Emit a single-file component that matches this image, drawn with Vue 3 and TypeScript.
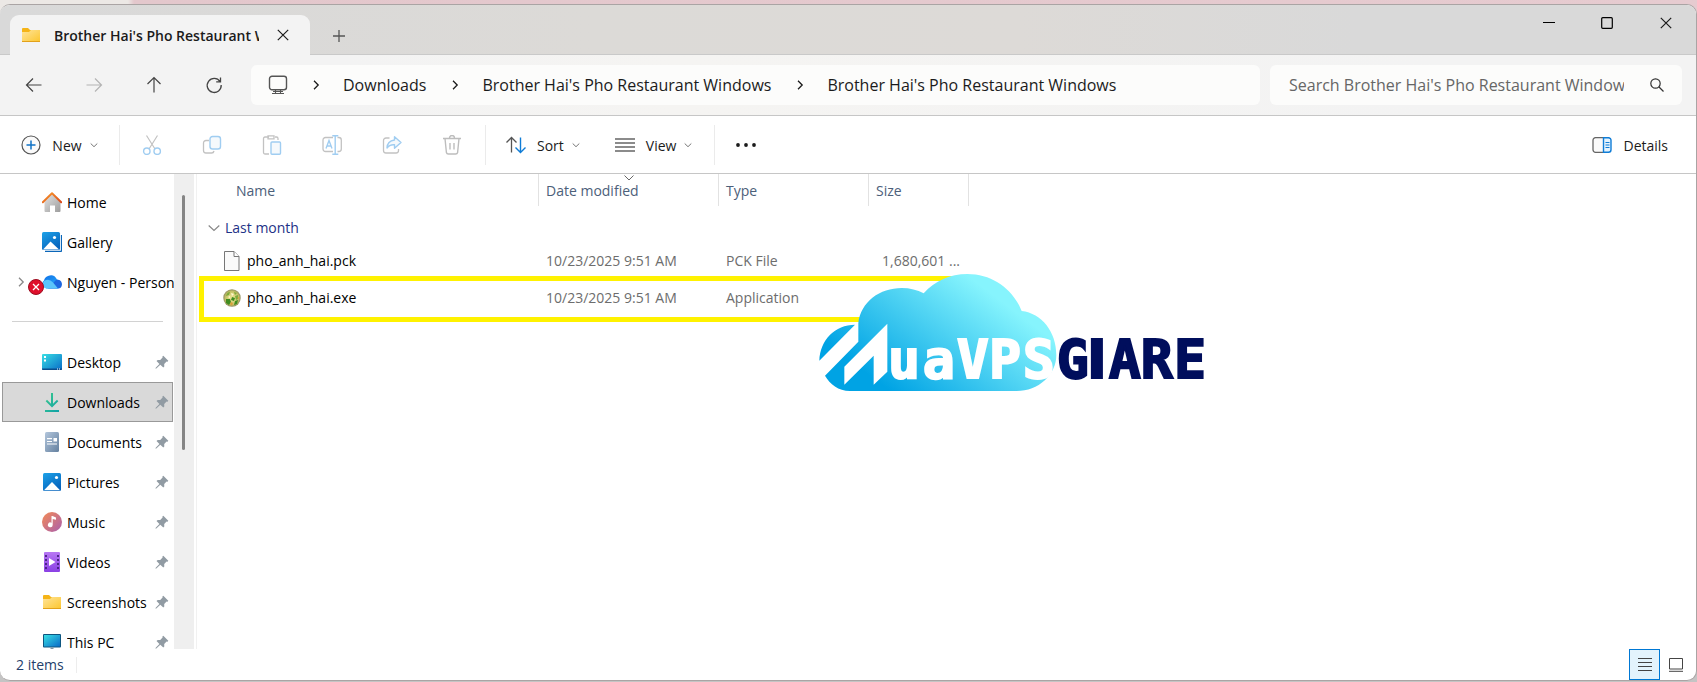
<script setup lang="ts">
interface NavItem {
  label: string
  icon: string
  pinned?: boolean
  selected?: boolean
  sync?: boolean
}

interface FileRow {
  name: string
  icon: string
  modified: string
  type: string
  size: string
  marked?: boolean
}

const places: NavItem[] = [
  { label: 'Home', icon: 'home' },
  { label: 'Gallery', icon: 'gallery' },
  { label: 'Nguyen - Personal', icon: 'cloud', sync: true },
]

const pinned: NavItem[] = [
  { label: 'Desktop', icon: 'desktop', pinned: true },
  { label: 'Downloads', icon: 'downloads', pinned: true, selected: true },
  { label: 'Documents', icon: 'documents', pinned: true },
  { label: 'Pictures', icon: 'pictures', pinned: true },
  { label: 'Music', icon: 'music', pinned: true },
  { label: 'Videos', icon: 'videos', pinned: true },
  { label: 'Screenshots', icon: 'folder', pinned: true },
  { label: 'This PC', icon: 'pc', pinned: true },
]

const crumbs: string[] = [
  'Downloads',
  "Brother Hai's Pho Restaurant Windows",
  "Brother Hai's Pho Restaurant Windows",
]

const navButtons = [
  { label: 'Back', icon: 'back' },
  { label: 'Forward', icon: 'forward' },
  { label: 'Up', icon: 'up' },
  { label: 'Refresh', icon: 'refresh' },
]

const fileActions = [
  { label: 'Cut', icon: 'cut' },
  { label: 'Copy', icon: 'copy' },
  { label: 'Paste', icon: 'paste' },
  { label: 'Rename', icon: 'rename' },
  { label: 'Share', icon: 'share' },
  { label: 'Delete', icon: 'trash' },
]

const files: FileRow[] = [
  { name: 'pho_anh_hai.pck', icon: 'file', modified: '10/23/2025 9:51 AM', type: 'PCK File', size: '1,680,601 ...' },
  { name: 'pho_anh_hai.exe', icon: 'game', modified: '10/23/2025 9:51 AM', type: 'Application', size: '', marked: true },
]
</script>

<template>
  <div class="desktop">
    <svg class="sprite" width="0" height="0" aria-hidden="true">
      <defs>
        <linearGradient id="g-folder" x1="0" y1="0" x2="1" y2="1"><stop offset="0" stop-color="#ffe49a" /><stop offset="1" stop-color="#fcc62e" /></linearGradient>
        <linearGradient id="g-roof" x1="0" y1="0" x2="1" y2="1"><stop offset="0" stop-color="#f99a2c" /><stop offset="1" stop-color="#d9491a" /></linearGradient>
        <linearGradient id="g-wall" x1="0" y1="0" x2="1" y2="1"><stop offset="0" stop-color="#e2e2e2" /><stop offset="1" stop-color="#9d9d9d" /></linearGradient>
        <linearGradient id="g-pic" x1="0" y1="0" x2="0.6" y2="1"><stop offset="0" stop-color="#1ea2e8" /><stop offset="1" stop-color="#0664bd" /></linearGradient>
        <linearGradient id="g-desk" x1="0" y1="0" x2="1" y2="1"><stop offset="0" stop-color="#38dfe4" /><stop offset="1" stop-color="#0a6cc8" /></linearGradient>
        <linearGradient id="g-down" x1="0" y1="0" x2="1" y2="1"><stop offset="0" stop-color="#3dcb8b" /><stop offset="1" stop-color="#0fa0a8" /></linearGradient>
        <linearGradient id="g-doc" x1="0" y1="0" x2="1" y2="1"><stop offset="0" stop-color="#b3c6dc" /><stop offset="1" stop-color="#64809f" /></linearGradient>
        <linearGradient id="g-music" x1="0" y1="0" x2="1" y2="1"><stop offset="0" stop-color="#f48b55" /><stop offset="1" stop-color="#a95fae" /></linearGradient>
        <linearGradient id="g-video" x1="0" y1="0" x2="0" y2="1"><stop offset="0" stop-color="#b777f3" /><stop offset="1" stop-color="#8a40e4" /></linearGradient>
        <linearGradient id="g-cloud" x1="0" y1="0" x2="1" y2="1"><stop offset="0" stop-color="#0f6ee8" /><stop offset="1" stop-color="#2ab3fb" /></linearGradient>
        <radialGradient id="g-game"><stop offset="0" stop-color="#f1e79a" /><stop offset="0.75" stop-color="#c5c268" /><stop offset="1" stop-color="#8f8d5e" /></radialGradient>
      </defs>

      <symbol id="i-folder" viewBox="0 0 20 20">
        <path d="M1 4a1 1 0 0 1 1-1h5l2 2h9a1 1 0 0 1 1 1v10H1z" fill="#f5b417" />
        <path d="M1 7h7l2-2h9v12H1z" fill="url(#g-folder)" />
        <path d="M1 16h18v1H1z" fill="#e2a11a" />
      </symbol>
      <symbol id="i-home" viewBox="0 0 20 20">
        <path d="M2.500 10 10 2.500l8.500 7.500v9a1 1 0 0 1-1 1H13v-6.500H8V20H3.500a1 1 0 0 1-1-1z" fill="url(#g-wall)" />
        <path d="M.8 10.200 10 1.200l9.200 9" fill="none" stroke="url(#g-roof)" stroke-width="2" stroke-linecap="round" stroke-linejoin="round" />
      </symbol>
      <symbol id="i-gallery" viewBox="0 0 20 20">
        <path d="M3 19.500h15.500a1 1 0 0 0 1-1V3" fill="none" stroke="#0b66b8" stroke-width="1.300" />
        <rect width="18" height="18" rx="1.500" fill="url(#g-pic)" />
        <path d="m1 17.500 7.500-8 8.500 8z" fill="#fff" /><circle cx="12.500" cy="5.500" r="1.600" fill="#fff" />
      </symbol>
      <symbol id="i-cloud" viewBox="0 0 20 20">
        <path d="M4.500 16.500A4.600 4.600 0 0 1 2 8.500 6 6 0 0 1 6 4q6-2.500 9 3.500a4.700 4.700 0 0 1 1 9z" fill="url(#g-cloud)" />
        <path d="M6 16.500 14 8q5-1 6 4-.2 4.500-4 4.500z" fill="#1c66e0" />
        <path d="M2 9q5-3 9 1.500l5 6H5A4.500 4.500 0 0 1 2 9z" fill="#5ac4fa" />
      </symbol>
      <symbol id="i-desktop" viewBox="0 0 20 20">
        <rect y="2" width="20" height="16" rx="1" fill="url(#g-desk)" />
        <path d="M0 16.500h20V17a1 1 0 0 1-1 1H1a1 1 0 0 1-1-1z" fill="#0a4c8c" />
        <path d="M2 4h2v2H2zM2 7.500h2v2H2z" fill="#fff" /><path d="M15 17h1m1 0h1" stroke="#fff" />
      </symbol>
      <symbol id="i-downloads" viewBox="0 0 20 20">
        <path d="M9 1h2v10.800l4-4 1.300 1.400L10 15.600 3.700 9.200 5 7.800l4 4zM3 18h14v2H3z" fill="url(#g-down)" />
      </symbol>
      <symbol id="i-documents" viewBox="0 0 20 20">
        <rect x="3" width="14" height="20" rx="1.500" fill="url(#g-doc)" />
        <path d="M5 6.700h5M5 9.500h5M5 12h10" stroke="#fff" stroke-width="1.200" /><path d="M11.500 6h3.500v3.500h-3.500z" fill="#fff" />
      </symbol>
      <symbol id="i-pictures" viewBox="0 0 20 20">
        <rect x="1" y="1" width="18" height="18" rx="1.500" fill="url(#g-pic)" />
        <path d="M2 18.200 10 10l8 8.200z" fill="#fff" /><circle cx="14.500" cy="5.500" r="1.600" fill="#fff" />
      </symbol>
      <symbol id="i-music" viewBox="0 0 20 20">
        <circle cx="10" cy="10" r="10" fill="url(#g-music)" />
        <path d="M9.500 4h1l3.500 1.500v2.300L10.700 7v6a2.400 2.400 0 1 1-1.200-2.200z" fill="#fff" />
      </symbol>
      <symbol id="i-videos" viewBox="0 0 20 20">
        <rect x="2" width="16" height="20" rx="1" fill="url(#g-video)" />
        <path d="M4 3v15M16 3v15" stroke="#44217e" stroke-width="1.800" stroke-dasharray="2 2" /><path d="m7 6 6.500 4L7 14z" fill="#fff" />
      </symbol>
      <symbol id="i-pc" viewBox="0 0 20 20">
        <rect x="1" y="2" width="18" height="13.500" rx="1" fill="#0d5580" /><rect x="2" y="3" width="16" height="11.500" fill="url(#g-desk)" />
        <path d="M8.500 15.500h3v2h-3z" fill="#8096a6" />
      </symbol>
      <symbol id="i-pin" viewBox="0 0 14 14">
        <path d="m8.300.7 5 5-.7 1-1-.1-2.400 2.300.1 2.500-1 1.200L5.300 9.700 1.300 13.500.5 13.700l.2-.9 3.700-3.900-2.900-3 1.200-1 2.500.1 2.400-2.400-.2-1z" fill="#919ba3" />
      </symbol>
      <symbol id="i-file" viewBox="0 0 20 20">
        <path d="M2.500.5H12l5 5v14H2.500z" fill="#fafafa" stroke="#777" /><path d="M12 .5v5h5" fill="#fff" stroke="#777" />
      </symbol>
      <symbol id="i-game" viewBox="0 0 20 20">
        <circle cx="10" cy="10" r="8.700" fill="url(#g-game)" />
        <path d="M4 8q1-4 4-4L7 7zM12 4l3 1-2 2zM13 8l3-1v4l-2 1z" fill="#7cab3a" />
        <path d="M4 11h4l1 3-2 3-3-2zM10 9l3 1-1 3-3-1zM13 13l3-1-1 4-3 1z" fill="#3f8d20" />
        <path d="m9 5 3 1-2 2zM6 9l2-1v2z" fill="#fffbd0" /><path d="m8 15 2-1 1 2-2 2zM15 10l2-1v2z" fill="#d9a03a" />
      </symbol>

      <symbol id="i-back" viewBox="0 0 20 20"><path d="M17.500 10h-15M9 3.500 2.500 10 9 16.500" fill="none" stroke="currentColor" stroke-width="1.200" /></symbol>
      <symbol id="i-forward" viewBox="0 0 20 20"><path d="M2.500 10h15M11 3.500l6.500 6.500-6.500 6.500" fill="none" stroke="currentColor" stroke-width="1.200" /></symbol>
      <symbol id="i-up" viewBox="0 0 20 20"><path d="M10 17.500v-15M3.500 9 10 2.500 16.500 9" fill="none" stroke="currentColor" stroke-width="1.200" /></symbol>
      <symbol id="i-refresh" viewBox="0 0 20 20"><path d="M16 6.500A7 7 0 1 0 17.200 10M16.500 2.500v4.300h-4.300" fill="none" stroke="currentColor" stroke-width="1.300" /></symbol>
      <symbol id="i-chev" viewBox="0 0 10 10"><path d="M3 .8 7.200 5 3 9.200" fill="none" stroke="currentColor" stroke-width="1.300" /></symbol>
      <symbol id="i-drop" viewBox="0 0 10 10"><path d="M1.700 3.500 5 6.700l3.300-3.200" fill="none" stroke="currentColor" /></symbol>
      <symbol id="i-cross" viewBox="0 0 12 12"><path d="m.8.8 10.400 10.400M11.200.8.8 11.200" fill="none" stroke="currentColor" stroke-width="1.200" /></symbol>
      <symbol id="i-cut" viewBox="0 0 20 20">
        <path d="M4.500.5 13 14M15.500.5 7 14" fill="none" stroke="#c2c2c2" stroke-width="1.200" />
        <g fill="#fff" stroke="#a0cdf1" stroke-width="1.400"><circle cx="4.800" cy="16.200" r="3.200" /><circle cx="15.200" cy="16.200" r="3.200" /></g>
      </symbol>
      <symbol id="i-copy" viewBox="0 0 20 20">
        <path d="M7 5.500H4A2.500 2.500 0 0 0 1.500 8v7.500A2.500 2.500 0 0 0 4 18h5.500a2.500 2.500 0 0 0 2.500-2" fill="none" stroke="#c2c2c2" stroke-width="1.300" />
        <rect x="8" y="1.500" width="10.500" height="12.500" rx="2.500" fill="#f5f9fc" stroke="#a0cdf1" stroke-width="1.400" />
      </symbol>
      <symbol id="i-paste" viewBox="0 0 20 20">
        <path d="M7 2H3a1.500 1.500 0 0 0-1.500 1.500v14A1.500 1.500 0 0 0 3 19h4M13 2h1.500A1.500 1.500 0 0 1 16 3.500V5M6 .8h6v3H6z" fill="none" stroke="#c2c2c2" stroke-width="1.300" />
        <rect x="9" y="7" width="9.500" height="12.300" rx="1" fill="#f5f9fc" stroke="#a0cdf1" stroke-width="1.400" />
      </symbol>
      <symbol id="i-rename" viewBox="0 0 20 20">
        <path d="M11 2.500H3.500A2.500 2.500 0 0 0 1 5v9a2.500 2.500 0 0 0 2.500 2.500H11M15.500 2.500h1.300A2.500 2.500 0 0 1 19.300 5v9a2.500 2.500 0 0 1-2.500 2.500h-1.300" fill="none" stroke="#c2c2c2" stroke-width="1.300" />
        <path d="M13.200.7v18.600M10.300.7h6M10.300 19.300h6M4 13.500 7 5.500l3 8M5 11h4.200" fill="none" stroke="#a0cdf1" stroke-width="1.400" />
      </symbol>
      <symbol id="i-share" viewBox="0 0 20 20">
        <path d="M7.500 3H4a2.500 2.500 0 0 0-2.500 2.500v10A2.500 2.500 0 0 0 4 18h10a2.500 2.500 0 0 0 2.500-2.500V14" fill="none" stroke="#c2c2c2" stroke-width="1.300" />
        <path d="M12.500 1.800 19 7.500l-6.500 5.700v-3.400q-5-.4-7.500 3.200.3-7 7.500-8z" fill="#f5f9fc" stroke="#a0cdf1" stroke-width="1.400" stroke-linejoin="round" />
      </symbol>
      <symbol id="i-trash" viewBox="0 0 20 20">
        <path d="M1 3.500h18M7.500 3a2.500 2.500 0 0 1 5 0M3 3.500l1.400 14A2 2 0 0 0 6.300 19h7.400a2 2 0 0 0 1.900-1.500l1.400-14M8 8v6.500M12 8v6.500" fill="none" stroke="#bdbdbd" stroke-width="1.400" />
      </symbol>
    </svg>

    <div class="window">
      <header class="titlebar">
        <div class="tab">
          <svg class="ico"><use href="#i-folder" /></svg>
          <span class="tab-title">Brother Hai's Pho Restaurant Windows</span>
          <button class="tab-close" type="button" aria-label="Close tab"><svg class="x12"><use href="#i-cross" /></svg></button>
        </div>
        <button class="new-tab" type="button" aria-label="New tab">
          <svg width="12" height="12" viewBox="0 0 12 12"><path d="M6 0v12M0 6h12" stroke="#555" stroke-width="1.300" /></svg>
        </button>
        <div class="caption">
          <button type="button" aria-label="Minimize"><svg width="12" height="12" viewBox="0 0 12 12"><path d="M0 5.500h12" stroke="#000" /></svg></button>
          <button type="button" aria-label="Maximize"><svg width="12" height="12" viewBox="0 0 12 12"><rect x=".7" y=".7" width="10.600" height="10.600" rx="1" fill="none" stroke="#000" stroke-width="1.200" /></svg></button>
          <button type="button" aria-label="Close"><svg class="x12"><use href="#i-cross" /></svg></button>
        </div>
      </header>

      <div class="navbar">
        <button v-for="b in navButtons" :key="b.icon" class="nav-btn" :class="{ dim: b.icon === 'forward' }" type="button" :aria-label="b.label" :disabled="b.icon === 'forward'">
          <svg class="ico"><use :href="'#i-' + b.icon" /></svg>
        </button>
        <nav class="address" aria-label="Address">
          <svg class="ico" viewBox="0 0 20 20"><rect x="1.500" y="1.200" width="17" height="13.500" rx="2.500" fill="none" stroke="#555" stroke-width="1.400" /><path d="M4 18.500h12M7.500 15v3.500M12.500 15v3.500M5 16.500h10" stroke="#555" stroke-width="1.100" /></svg>
          <template v-for="(c, i) in crumbs" :key="i">
            <svg class="chev"><use href="#i-chev" /></svg>
            <a href="#" class="crumb">{{ c }}</a>
          </template>
        </nav>
        <label class="search">
          <input type="text" aria-label="Search" placeholder="Search Brother Hai's Pho Restaurant Windows" />
          <svg width="14" height="14" viewBox="0 0 14 14"><circle cx="5.500" cy="5.500" r="4.700" fill="none" stroke="#333" stroke-width="1.200" /><path d="m9 9 4.500 4.500" stroke="#333" stroke-width="1.200" /></svg>
        </label>
      </div>

      <div class="toolbar">
        <button class="cmd new" type="button">
          <svg class="ico" viewBox="0 0 20 20"><circle cx="10" cy="10" r="9" fill="#fafafa" stroke="#555" stroke-width="1.200" /><path d="M10 5.500v9M5.500 10h9" stroke="#0f72c6" stroke-width="1.500" /></svg>
          <span>New</span><svg class="drop"><use href="#i-drop" /></svg>
        </button>
        <div class="group edit">
          <button v-for="a in fileActions" :key="a.icon" class="act" type="button" disabled :aria-label="a.label"><svg class="ico"><use :href="'#i-' + a.icon" /></svg></button>
        </div>
        <div class="group arrange">
          <button class="cmd" type="button">
            <svg class="ico" viewBox="0 0 20 20"><path d="M5.500 17.500V2.500M.5 7.500l5-5 5 5" fill="none" stroke="#555" stroke-width="1.300" /><path d="M14.500 2.500v15M9.500 12.500l5 5 5-5" fill="none" stroke="#0f7cd6" stroke-width="1.400" /></svg>
            <span>Sort</span><svg class="drop"><use href="#i-drop" /></svg>
          </button>
          <button class="cmd" type="button">
            <svg class="ico" viewBox="0 0 20 20"><path d="M0 4h20M0 8h20M0 12h20M0 16h20" stroke="#666" stroke-width="1.300" /></svg>
            <span>View</span><svg class="drop"><use href="#i-drop" /></svg>
          </button>
        </div>
        <button class="more" type="button" aria-label="See more"><svg class="ico" viewBox="0 0 20 20"><g fill="#1b1b1b"><circle cx="2" cy="10" r="1.900" /><circle cx="10" cy="10" r="1.900" /><circle cx="18" cy="10" r="1.900" /></g></svg></button>
        <button class="cmd details" type="button">
          <svg class="ico" viewBox="0 0 20 20"><path d="M11 2.700H3.500A2.500 2.500 0 0 0 1 5.200v9.600a2.500 2.500 0 0 0 2.500 2.500H11" fill="#fafafa" stroke="#666" stroke-width="1.300" /><path d="M11.500 2.700h5A2.500 2.500 0 0 1 19 5.200v9.600a2.500 2.500 0 0 1-2.500 2.500h-5z" fill="#e3f2fd" stroke="#0f7cd6" stroke-width="1.400" /><path d="M13.500 7.500h4M13.500 10h4M13.500 12.500h4" stroke="#0f7cd6" stroke-width="1.200" /></svg>
          <span>Details</span>
        </button>
      </div>

      <div class="body">
        <aside class="side">
          <ul class="tree">
            <li v-for="p in places" :key="p.label">
              <a href="#" class="item plain">
                <span v-if="p.sync" class="sync">
                  <svg width="10" height="10"><use href="#i-chev" /></svg>
                  <svg class="err" width="16" height="16" viewBox="0 0 16 16"><circle cx="8" cy="8" r="7.500" fill="#df0f2b" stroke="#9c0d20" /><path d="m5 5 6 6m0-6-6 6" stroke="#fff" stroke-width="1.300" /></svg>
                </span>
                <svg class="ico"><use :href="'#i-' + p.icon" /></svg><span class="label">{{ p.label }}</span>
              </a>
            </li>
          </ul>
          <hr class="rule" />
          <ul class="tree">
            <li v-for="p in pinned" :key="p.label">
              <a href="#" class="item" :class="{ selected: p.selected }">
                <svg class="ico"><use :href="'#i-' + p.icon" /></svg><span class="label">{{ p.label }}</span>
                <svg class="pin"><use href="#i-pin" /></svg>
              </a>
            </li>
          </ul>
        </aside>
        <div class="track"><div class="thumb"></div></div>

        <main class="files">
          <table>
            <colgroup><col class="c-name" /><col class="c-date" /><col class="c-type" /><col class="c-size" /></colgroup>
            <thead>
              <tr>
                <th scope="col" class="h-name">Name</th>
                <th scope="col" class="h-date">Date modified<svg class="sorted" width="10" height="6" viewBox="0 0 10 6"><path d="m.5.5 4.500 4.500L9.500.5" fill="none" stroke="#666" /></svg></th>
                <th scope="col">Type</th>
                <th scope="col">Size</th>
              </tr>
            </thead>
            <tbody>
              <tr class="section">
                <th scope="rowgroup" colspan="4"><span class="section-in"><svg width="12" height="12" viewBox="0 0 12 12"><path d="m.7 3.500 5.300 5 5.300-5" fill="none" stroke="#888" stroke-width="1.200" /></svg>Last month</span></th>
              </tr>
              <tr v-for="f in files" :key="f.name" class="file">
                <td><span class="file-name"><svg class="ico"><use :href="'#i-' + f.icon" /></svg>{{ f.name }}</span><span v-if="f.marked" class="marker"></span></td>
                <td class="meta">{{ f.modified }}</td>
                <td class="meta">{{ f.type }}</td>
                <td class="meta size">{{ f.size }}</td>
              </tr>
            </tbody>
          </table>

          <svg class="logo" viewBox="51 39 1170 360" role="img" aria-label="MuaVPSGIARE">
            <defs>
              <linearGradient id="g-logo" gradientUnits="userSpaceOnUse" x1="270" y1="393" x2="520" y2="60"><stop offset="0" stop-color="#00a3e4" /><stop offset="1" stop-color="#86f4fd" /></linearGradient>
            </defs>
            <path fill="url(#g-logo)" d="M165 194 58 302C60 240 105 194 165 194ZM175 245V190C182 125 240 84 305 84 330 84 352 90 371 100 405 62 450 42 502 42 580 42 640 90 665 153 725 160 769 215 769 285 769 345 715 393 650 393H150C115 393 90 372 75 347Z" />
            <path fill="#fff" d="M262 191 133 320v54l88-87v87l41-39z" />
            <g class="wordmark">
              <text class="light" y="355" x="264 368 470 567 668">uaVPS</text>
              <text class="dark" y="355" x="770 861 926 1022 1122">G<tspan class="slim">I</tspan>ARE</text>
            </g>
          </svg>
        </main>
      </div>

      <footer class="status">
        <span class="count">2 items</span>
        <div class="views">
          <button class="on" type="button" aria-label="Details view"><svg width="14" height="14" viewBox="0 0 14 14"><path d="M0 .5h14M0 4.500h14M0 8.500h14M0 12.500h14" stroke="#444" /></svg></button>
          <button type="button" aria-label="Large icons view"><svg width="14" height="14" viewBox="0 0 14 14"><path d="M.5.500h13v10.500H.5zM0 13.300h14" fill="none" stroke="#444" /></svg></button>
        </div>
      </footer>
    </div>
  </div>
</template>

<style>
body {
  margin: 0;
}
</style>

<style scoped>
.desktop {
  box-sizing: border-box;
  height: 100vh;
  padding: 4px 0 1px;
  background: linear-gradient(90deg, #ece8e5 0 128px, #e3c7cc 134px, #e6cbd0) top / 100% 24px no-repeat, #c4c4c4;
  font-family: "Open Sans", "Noto Sans", sans-serif;
  font-size: 14px;
  line-height: 20px;
  color: #1b1b1b;
}
.sprite { position: absolute; }
button {
  display: flex;
  align-items: center;
  justify-content: center;
  padding: 0;
  border: 0;
  background: none;
  font: inherit;
  color: inherit;
}
a { color: inherit; text-decoration: none; }
.ico { flex: none; width: 20px; height: 20px; }
.x12 { width: 12px; height: 12px; }

.window {
  box-sizing: border-box;
  display: flex;
  flex-direction: column;
  height: 100%;
  overflow: hidden;
  border: 1px solid #aaa4a4;
  border-left: 0;
  border-radius: 10px;
  background: #fff;
}
.titlebar {
  display: flex;
  flex: none;
  height: 49px;
  border-bottom: 1px solid #c9c9c9;
  background: linear-gradient(90deg, #d9d9d9, #dcdad7 35%, #dddad7 60%, #d9d9d9 80%);
}
.tab {
  display: flex;
  align-items: center;
  box-sizing: border-box;
  width: 300px;
  height: 40px;
  margin: 10px 0 0 10px;
  padding: 0 12px 0 11px;
  border-radius: 9px 9px 0 0;
  background: #f3f3f3;
}
.tab-title {
  flex: 1;
  margin-left: 13px;
  padding-top: 1px;
  overflow: hidden;
  white-space: nowrap;
  font-weight: 600;
}
.tab-close { width: 30px; height: 30px; margin-left: 9px; }
.new-tab { width: 40px; height: 40px; margin: 11px 0 0 9px; }
.caption { display: flex; margin-left: auto; }
.caption button { width: 58px; height: 36px; }
.caption button:last-child { width: 60px; }

.navbar {
  display: flex;
  flex: none;
  align-items: center;
  height: 60px;
  padding: 0 14px 0 9px;
  border-bottom: 1px solid #c6c6c6;
  background: linear-gradient(90deg, #f3f3f3 20%, #f5f4f2 40%, #f3f3f3 85%);
}
.nav-btn { width: 50px; height: 40px; margin-right: 10px; color: #444; }
.nav-btn.dim { color: #b4b4b4; }
.address, .search {
  display: flex;
  align-items: center;
  box-sizing: border-box;
  height: 40px;
  border-radius: 6px;
  background: #fcfcfb;
  font-size: 16px;
}
.address { flex: 1; min-width: 0; margin-left: 2px; padding-left: 17px; }
.chev { flex: none; width: 10px; height: 10px; margin: 0 22px 0 23px; }
.crumb { margin-right: 1px; white-space: nowrap; }
.search { width: 412px; margin-left: 10px; padding: 0 18px 0 19px; }
.search input {
  flex: 1;
  min-width: 0;
  margin-right: 26px;
  padding: 0;
  border: 0;
  outline: 0;
  background: none;
  font: inherit;
}
.search input::placeholder { color: #666; opacity: 1; }

.toolbar {
  display: flex;
  flex: none;
  align-items: center;
  height: 57px;
  border-bottom: 1px solid #c6c6c6;
}
.cmd { gap: 11px; }
.cmd span { padding-top: 2px; }
.cmd .drop { width: 10px; height: 10px; color: #777; margin-left: -4px; }
.new { width: 119px; padding-left: 1px; }
.group {
  display: flex;
  align-items: center;
  height: 40px;
  border-left: 1px solid #ebebeb;
}
.edit { box-sizing: border-box; width: 366px; padding: 0 3px 0 2px; }
.act { width: 60px; height: 40px; }
.arrange { gap: 34px; padding: 0 21px 0 20px; border-right: 1px solid #ebebeb; }
.more { width: 62px; height: 40px; }
.details { margin: 0 28px 0 auto; }

.body { display: flex; flex: 1; min-height: 0; }
.side { width: 174px; overflow: hidden; color: #000; padding-top: 8px; box-sizing: border-box; }
.tree { margin: 0; padding: 0; list-style: none; }
.item {
  display: flex;
  position: relative;
  align-items: center;
  box-sizing: border-box;
  height: 40px;
  margin: 0 1px 0 2px;
  padding: 0 3px 0 39px;
  border: 1px solid transparent;
}
.item.plain { margin-right: 0; padding-right: 0; border-right: 0; }
.item.selected { border-color: #999; background: #d9d9d9; }
.label { flex: 1; margin-left: 5px; padding-top: 1px; overflow: hidden; white-space: nowrap; }
.pin { flex: none; width: 14px; height: 14px; }
.sync { position: absolute; left: 13px; top: 14px; display: flex; color: #888; z-index: 1; }
.err { margin: 2px 0 0 2px; }
.rule { margin: 19px 11px 20px 12px; border: 0; border-top: 1px solid #d2d2d2; }
.track { box-sizing: border-box; width: 20px; padding: 21px 9px 0 8px; background: #efefef; }
.thumb { height: 255px; border-radius: 2px; background: #858585; }

.files {
  position: relative;
  flex: 1;
  margin-left: 2px;
  border-left: 1px solid #f1f1f1;
}
table { width: 772px; table-layout: fixed; border-collapse: separate; border-spacing: 0; }
.c-name { width: 342px; }
.c-date { width: 180px; }
.c-type { width: 150px; }
.c-size { width: 100px; }
th { font-weight: 400; text-align: left; }
thead th { position: relative; height: 32px; padding: 2px 0 0 7px; border-right: 1px solid #e2e2e2; box-sizing: border-box; color: #4c607a; }
thead .h-name { padding-left: 39px; }
.sorted { position: absolute; top: 1px; left: 50%; margin-left: -5px; }
.section th { height: 36px; padding: 8px 0 0 11px; box-sizing: border-box; color: #1e3287; }
.section-in { display: flex; align-items: center; gap: 5px; }
.file td { position: relative; height: 37px; padding: 0 9px 0 7px; box-sizing: border-box; color: #000; white-space: nowrap; }
.file .meta { color: #6d6d6d; }
.file .size { text-align: right; }
.file-name { display: flex; align-items: center; gap: 5px; padding-left: 18px; }
.marker {
  position: absolute;
  top: -3px;
  left: 2px;
  box-sizing: border-box;
  width: 776px;
  height: 46px;
  border: 5px solid #fff200;
}
.logo { position: absolute; top: 99px; left: 620px; width: 390px; height: 120px; overflow: visible; }
.wordmark {
  font-family: "DejaVu Sans Mono", monospace;
  font-size: 160px;
  font-weight: 700;
  stroke-width: 6px;
}
.slim { font-family: "DejaVu Sans", sans-serif; }
.light { fill: #fff; stroke: #fff; }
.dark { fill: #000e5c; stroke: #000e5c; }

.status { display: flex; flex: none; align-items: center; height: 31px; padding: 0 5px 0 16px; color: #24406b; }
.count { padding-right: 12px; border-right: 1px solid #ededed; line-height: 16px; }
.views { display: flex; margin-left: auto; }
.views button { width: 31px; height: 31px; box-sizing: border-box; }
.views .on { border: 1px solid #0078d4; background: #e3f3fc; }
</style>
